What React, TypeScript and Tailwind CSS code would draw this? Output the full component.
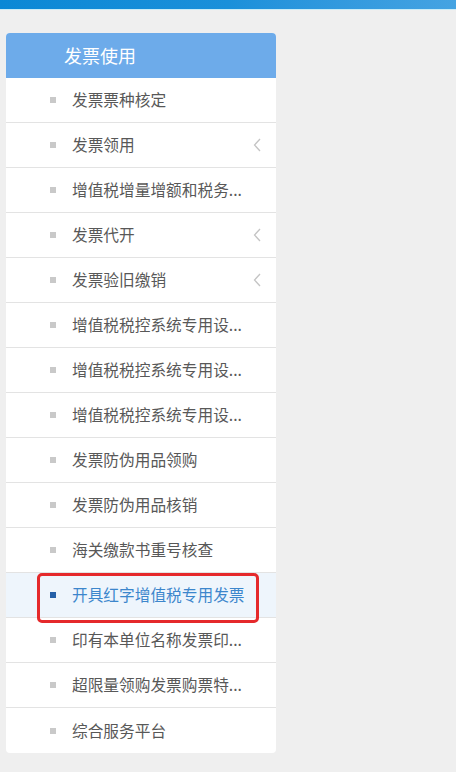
import React from 'react';

const items: { label: string; arrow?: boolean }[] = [
  { label: '发票票种核定' },
  { label: '发票领用', arrow: true },
  { label: '增值税增量增额和税务...' },
  { label: '发票代开', arrow: true },
  { label: '发票验旧缴销', arrow: true },
  { label: '增值税税控系统专用设...' },
  { label: '增值税税控系统专用设...' },
  { label: '增值税税控系统专用设...' },
  { label: '发票防伪用品领购' },
  { label: '发票防伪用品核销' },
  { label: '海关缴款书重号核查' },
  { label: '开具红字增值税专用发票' },
  { label: '印有本单位名称发票印...' },
  { label: '超限量领购发票购票特...' },
  { label: '综合服务平台' },
];

const ACTIVE = 11;

const Chevron = () => (
  <svg width="8" height="14" viewBox="0 0 8 14" fill="none" className="shrink-0">
    <path d="M7 1L1.5 7L7 13" stroke="#c4c4c4" strokeWidth="1.3" />
  </svg>
);

export default function App() {
  return (
    <div
      className="min-h-[772px] w-[456px] bg-[#efefef]"
      style={{ fontFamily: '"Noto Sans CJK SC", "Noto Sans", sans-serif' }}
    >
      <div className="h-[9px] bg-gradient-to-r from-[#0a88d5] via-[#1a90da] to-[#44a3e2]" />
      <div className="h-px bg-[#c9ecf8]" />

      <div className="pl-[6px] pt-[23px]">
        <div className="w-[270px] rounded-[4px] bg-white">
          <div className="flex h-[45px] items-center rounded-t-[4px] bg-[#6dabea] pl-[58px] text-[18px] text-white">
            发票使用
          </div>
          {items.map((it, i) => {
            const active = i === ACTIVE;
            return (
              <div
                key={i}
                className={`relative flex h-[45px] items-center pl-[44px] pr-[15px] ${
                  i < items.length - 1 ? 'border-b border-[#e3e3e3]' : ''
                } ${active ? 'bg-[#eef5fc]' : ''}`}
              >
                <span
                  className={`mr-[16px] h-[6px] w-[6px] shrink-0 ${
                    active ? 'bg-[#2560a8]' : 'bg-[#c9c9c9]'
                  }`}
                />
                <span
                  className={`flex-1 whitespace-nowrap text-[15.7px] ${
                    active ? 'text-[#3c86cc]' : 'text-[#585858]'
                  }`}
                >
                  {it.label}
                </span>
                {it.arrow && <Chevron />}
                {active && (
                  <div className="pointer-events-none absolute left-[31px] top-0 h-[50px] w-[222px] rounded-[5px] border-[3px] border-[#e5292b]" />
                )}
              </div>
            );
          })}
        </div>
      </div>
    </div>
  );
}
